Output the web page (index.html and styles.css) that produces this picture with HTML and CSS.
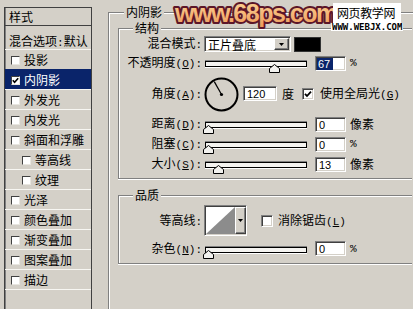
FILE: index.html
```html
<!DOCTYPE html>
<html lang="zh-CN">
<head>
<meta charset="utf-8">
<title>图层样式 - 内阴影</title>
<link rel="stylesheet" href="styles.css">
</head>
<body>
<div class="app">
  <div class="side">
    <div class="side-head">样式</div>
    <div class="side-blend">混合选项<span class="m">:</span>默认</div>
    <div class="item"><span class="box"></span>投影</div>
    <div class="item sel"><span class="box"><svg width="7" height="7" viewBox="0 0 7 7"><polyline points="0.8,3.2 2.6,5.2 6.2,1.2" fill="none" stroke="#000" stroke-width="1.6"/></svg></span>内阴影</div>
    <div class="item"><span class="box"></span>外发光</div>
    <div class="item"><span class="box"></span>内发光</div>
    <div class="item"><span class="box"></span>斜面和浮雕</div>
    <div class="item sub"><span class="box"></span>等高线</div>
    <div class="item sub"><span class="box"></span>纹理</div>
    <div class="item"><span class="box"></span>光泽</div>
    <div class="item"><span class="box"></span>颜色叠加</div>
    <div class="item"><span class="box"></span>渐变叠加</div>
    <div class="item"><span class="box"></span>图案叠加</div>
    <div class="item"><span class="box"></span>描边</div>
    <div class="item empty"></div>
  </div>

  <div class="group outer">
    <div class="legend">内阴影</div>

    <div class="group inner struct">
      <div class="legend">结构</div>

      <div class="row r-blend">
        <div class="lbl">混合模式<span class="m">:</span></div>
        <div class="select sunk">
          <span class="select-text">正片叠底</span>
          <span class="drop"><svg width="5" height="3" viewBox="0 0 5 3"><polygon points="0,0 5,0 2.5,3" fill="#000"/></svg></span>
        </div>
        <div class="swatch"></div>
      </div>

      <div class="row r-20">
        <div class="lbl">不透明度<span class="m">(<u>O</u>):</span></div>
        <div class="slider"><div class="track"></div><span class="thumb" style="left:69px"><svg width="11" height="9" viewBox="0 0 11 9"><polygon points="0.5,8.5 0.5,4.5 5.5,0.5 10.5,4.5 10.5,8.5" fill="#f2f1ee" stroke="#000"/></svg></span></div>
        <div class="num sunk"><span class="hl">67</span></div>
        <span class="unit m">%</span>
      </div>

      <div class="row r-angle">
        <div class="lbl">角度<span class="m">(<u>A</u>):</span></div>
        <svg class="dial" width="35" height="35" viewBox="0 0 35 35"><circle cx="17.5" cy="17.5" r="16" fill="none" stroke="#000" stroke-width="2"/><line x1="17.5" y1="17.5" x2="10.3" y2="4.6" stroke="#000" stroke-width="1.2"/><circle cx="17.5" cy="17.5" r="1.6" fill="#000"/></svg>
        <div class="num wide sunk">120</div>
        <span class="deg">度</span>
        <span class="cbx sunk"><svg width="8" height="8" viewBox="0 0 8 8"><polyline points="1,3.8 3,6 7,1.6" fill="none" stroke="#000" stroke-width="1.8"/></svg></span>
        <span class="cbx-text">使用全局光<span class="m">(<u>G</u>)</span></span>
      </div>

      <div class="row r-20">
        <div class="lbl">距离<span class="m">(<u>D</u>):</span></div>
        <div class="slider"><div class="track"></div><span class="thumb" style="left:3px"><svg width="11" height="9" viewBox="0 0 11 9"><polygon points="0.5,8.5 0.5,4.5 5.5,0.5 10.5,4.5 10.5,8.5" fill="#f2f1ee" stroke="#000"/></svg></span></div>
        <div class="num sunk">0</div>
        <span class="unit">像素</span>
      </div>

      <div class="row r-20">
        <div class="lbl">阻塞<span class="m">(<u>C</u>):</span></div>
        <div class="slider"><div class="track"></div><span class="thumb" style="left:3px"><svg width="11" height="9" viewBox="0 0 11 9"><polygon points="0.5,8.5 0.5,4.5 5.5,0.5 10.5,4.5 10.5,8.5" fill="#f2f1ee" stroke="#000"/></svg></span></div>
        <div class="num sunk">0</div>
        <span class="unit m">%</span>
      </div>

      <div class="row r-20">
        <div class="lbl">大小<span class="m">(<u>S</u>):</span></div>
        <div class="slider"><div class="track"></div><span class="thumb" style="left:13px"><svg width="11" height="9" viewBox="0 0 11 9"><polygon points="0.5,8.5 0.5,4.5 5.5,0.5 10.5,4.5 10.5,8.5" fill="#f2f1ee" stroke="#000"/></svg></span></div>
        <div class="num sunk">13</div>
        <span class="unit">像素</span>
      </div>
    </div>

    <div class="group inner quality">
      <div class="legend">品质</div>

      <div class="row r-contour">
        <div class="lbl">等高线<span class="m">:</span></div>
        <div class="contour sunk">
          <svg class="curve" width="29" height="27" viewBox="0 0 29 27"><rect width="29" height="27" fill="#fff"/><polygon points="0,27 29,0 29,27" fill="#8c8c8c"/></svg>
          <span class="drop tall"><svg width="5" height="3" viewBox="0 0 5 3"><polygon points="0,0 5,0 2.5,3" fill="#000"/></svg></span>
        </div>
        <span class="cbx sunk aa"></span>
        <span class="cbx-text aa-text">消除锯齿<span class="m">(<u>L</u>)</span></span>
      </div>

      <div class="row r-noise">
        <div class="lbl">杂色<span class="m">(<u>N</u>):</span></div>
        <div class="slider"><div class="track"></div><span class="thumb" style="left:3px"><svg width="11" height="9" viewBox="0 0 11 9"><polygon points="0.5,8.5 0.5,4.5 5.5,0.5 10.5,4.5 10.5,8.5" fill="#f2f1ee" stroke="#000"/></svg></span></div>
        <div class="num sunk">0</div>
        <span class="unit m">%</span>
      </div>
    </div>
  </div>
</div>

<div class="watermark">
  <div class="wm-site">
    <div class="wm-cn">网页教学网</div>
    <div class="wm-en">WWW.WEBJX.COM</div>
  </div>
  <svg class="wm-logo" width="166" height="30" viewBox="0 0 166 30">
    <defs>
      <linearGradient id="wmfill" x1="0" y1="0" x2="0" y2="1">
        <stop offset="0" stop-color="#fdd89a"/>
        <stop offset="1" stop-color="#ee9c5c"/>
      </linearGradient>
    </defs>
    <text x="3" y="21.5" class="wm-text">www.68ps.com</text>
  </svg>
</div>
</body>
</html>
```

FILE: styles.css
```css
* { box-sizing: border-box; }

html, body {
  margin: 0;
  padding: 0;
}

body {
  width: 413px;
  height: 309px;
  overflow: hidden;
  position: relative;
  background: #d4d0c8;
  color: #000;
  font: 12px/14px "Noto Sans CJK SC", sans-serif;
}

.m {
  font-family: "Liberation Mono", monospace;
  font-size: 11px;
}

.app {
  display: flex;
  align-items: flex-start;
  height: 309px;
}

/* ---------- left style list ---------- */
.side {
  flex: none;
  width: 88px;
  height: 302px;
  margin: 7px 0 0 4px;
  border: 1px solid #404040;
  border-bottom: 0;
  box-shadow: inset 1px 0 #808080;
  display: flex;
  flex-direction: column;
  overflow: hidden;
}

.side-head {
  flex: none;
  height: 18px;
  padding: 2px 0 0 4px;
  border-bottom: 1px solid #404040;
}

.side-blend {
  flex: none;
  height: 23px;
  padding: 8px 0 0 4px;
  white-space: nowrap;
}

.item {
  flex: none;
  display: flex;
  align-items: center;
  height: 20px;
  padding: 1px 0 0 6px;
  border-top: 1px solid #f7f6f2;
  white-space: nowrap;
}

.item.sub { padding-left: 17px; }

.item.sel {
  background: #0a246a;
  border-top-color: #0a246a;
  color: #fff;
}

.box {
  flex: none;
  width: 9px;
  height: 9px;
  margin-right: 4px;
  background: #fff;
  border-top: 1px solid #404040;
  border-left: 1px solid #404040;
  border-right: 1px solid #e8e6e0;
  border-bottom: 1px solid #e8e6e0;
  display: flex;
  align-items: center;
  justify-content: center;
}

/* ---------- group boxes ---------- */
.group {
  border: 1px solid #808080;
  box-shadow: inset 1px 1px #fff, 1px 1px #fff;
}

.legend {
  width: max-content;
  margin-top: -8px;
  padding: 0 2px;
  height: 14px;
  line-height: 14px;
  background: #d4d0c8;
}

.outer {
  flex: none;
  width: 305px;
  height: 297px;
  margin: 12px 0 0 16px;
  border-right: 0;
  border-bottom: 0;
  box-shadow: inset 1px 1px #fff;
}

.outer > .legend { margin-left: 15px; }

.inner {
  width: 294px;
  margin-left: 9px;
  border-right: 0;
  box-shadow: inset 1px 1px #fff, 0 1px #fff;
}

.inner > .legend { margin-left: 14px; }

.struct {
  margin-top: 9px;
  padding-bottom: 4px;
}

.quality {
  margin-top: 16px;
  padding-bottom: 5px;
}

/* ---------- rows ---------- */
.row {
  display: flex;
  align-items: center;
  white-space: nowrap;
}

.r-blend { height: 18px; }
.r-20 { height: 20px; }
.r-angle { height: 41px; }
.r-contour { height: 37px; }
.r-noise { height: 19px; }

.lbl {
  flex: none;
  width: 83px;
  text-align: right;
}

.sunk {
  border: 1px solid;
  border-color: #808080 #fff #fff #808080;
  box-shadow: inset 1px 1px #404040, inset -1px -1px #d4d0c8;
}

/* select */
.select {
  flex: none;
  display: flex;
  align-items: stretch;
  width: 87px;
  height: 16px;
  margin-left: 2px;
  padding: 1px;
  background: #fff;
}

.select-text {
  flex: 1;
  padding-left: 2px;
  line-height: 13px;
}

.drop {
  flex: none;
  width: 15px;
  display: flex;
  align-items: center;
  justify-content: center;
  background: #d4d0c8;
  border: 1px solid;
  border-color: #fff #404040 #404040 #fff;
  box-shadow: inset -1px -1px #808080;
}

.swatch {
  flex: none;
  width: 27px;
  height: 15px;
  margin-left: 3px;
  background: #000;
  border: 1px solid #333;
}

/* slider */
.slider {
  flex: none;
  position: relative;
  width: 102px;
  height: 18px;
  margin-left: 3px;
}

.track {
  margin-top: 7px;
  height: 6px;
  background: #f4f3f0;
  border: 1px solid #000;
  box-shadow: 0 -1px #808080, 0 1px #fff;
}

.thumb {
  position: absolute;
  top: 10px;
  width: 11px;
  height: 9px;
  margin-left: -5px;
  display: block;
  line-height: 0;
}

/* numeric fields */
.num {
  flex: none;
  width: 31px;
  height: 15px;
  margin-left: 8px;
  padding: 1px 0 0 3px;
  background: #fff;
  font: 11px/12px "Liberation Sans", sans-serif;
}

.num.wide {
  width: 34px;
  margin-left: 4px;
}

.hl {
  background: #0a246a;
  color: #fff;
  padding: 0 3px 0 1px;
  margin-left: -2px;
}

.unit { margin-left: 4px; }

.deg { margin-left: 5px; }

.dial {
  flex: none;
  margin: 2px 0 0 2px;
}

.cbx {
  flex: none;
  width: 12px;
  height: 12px;
  margin-left: 8px;
  background: #fff;
  display: flex;
  align-items: center;
  justify-content: center;
}

.cbx-text { margin-left: 6px; }

/* contour */
.contour {
  flex: none;
  display: flex;
  width: 43px;
  height: 31px;
  margin-left: 2px;
  padding: 1px;
  background: #fff;
}

.curve { display: block; flex: none; }

.drop.tall {
  width: 11px;
  align-items: center;
}

.cbx.aa { margin-left: 14px; }
.aa-text { margin-left: 5px; }

/* ---------- watermark overlay ---------- */
.watermark {
  position: absolute;
  top: 0;
  left: 172px;
  width: 236px;
  display: flex;
  flex-direction: row-reverse;
  justify-content: flex-end;
  align-items: flex-start;
}

.wm-logo { display: block; flex: none; }

.wm-text {
  font-family: "Liberation Sans", sans-serif;
  font-weight: bold;
  font-size: 25px;
  letter-spacing: -1.5px;
  fill: url(#wmfill);
  stroke: #5c1629;
  stroke-width: 4px;
  stroke-linejoin: round;
  paint-order: stroke fill;
}

.wm-site {
  flex: none;
  margin: 3px 0 0 -5px;
  display: flex;
  flex-direction: column;
  align-items: flex-start;
}

.wm-cn {
  background: #fff;
  padding: 2px 6px 3px 4px;
  font-size: 12px;
  line-height: 15px;
  letter-spacing: -0.4px;
}

.wm-en {
  margin-left: -2px;
  padding: 0 1px;
  background: #fff;
  font: bold 9px/8px "DejaVu Sans Mono", monospace;
  letter-spacing: 0;
}
```
